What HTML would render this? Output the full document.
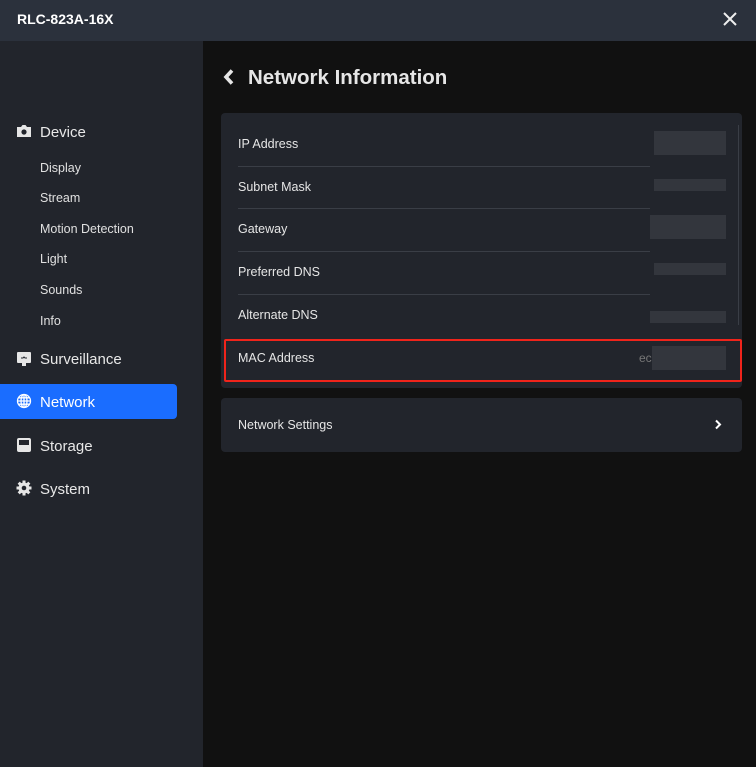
<!DOCTYPE html>
<html><head><meta charset="utf-8"><style>
*{margin:0;padding:0;box-sizing:border-box}
body{width:756px;height:767px;background:#111;font-family:"Liberation Sans",Arial,sans-serif;position:relative;overflow:hidden;color:#e6e6e6}
.hdr{position:absolute;left:0;top:0;width:756px;height:41px;background:#2b313c}
.hdr .t{position:absolute;left:17px;top:11px;font-size:14px;font-weight:bold;color:#fff}
.side{position:absolute;left:0;top:41px;width:203px;height:726px;background:#22252c}
.m{position:absolute;left:40px;font-size:15px;color:#e8e8e8}
.s{position:absolute;left:40px;font-size:12.5px;color:#e0e0e0}
.ic{position:absolute;left:16px}
.act{position:absolute;left:0;top:384px;width:177px;height:35px;background:#1a6dff;border-radius:0 4px 4px 0}
.card{position:absolute;left:221px;width:521px;background:#22252c;border-radius:4px}
.row{position:absolute;left:238px;font-size:12.5px;color:#e6e6e6}
.div{position:absolute;left:238px;width:412px;height:1px;background:#3a3e46}
.blur{position:absolute;background:#33363d}
</style></head><body>
<div class="hdr"><div class="t">RLC-823A-16X</div>
<svg style="position:absolute;left:723px;top:12px" width="14" height="14" viewBox="0 0 14 14"><path d="M1 1L13 13M13 1L1 13" stroke="#eee" stroke-width="2"/></svg></div>
<div class="side"></div>
<div class="act"></div>
<svg class="ic" style="top:124px" width="16" height="14" viewBox="0 0 16 14"><path d="M1 3h4l1.5-2h3L11 3h4v10H1z" fill="#e6e6e6"/><circle cx="8" cy="8" r="2.6" fill="#22252c"/></svg>
<div class="m" style="top:124px">Device</div>
<div class="s" style="top:161px">Display</div>
<div class="s" style="top:191px">Stream</div>
<div class="s" style="top:222px">Motion Detection</div>
<div class="s" style="top:252px">Light</div>
<div class="s" style="top:283px">Sounds</div>
<div class="s" style="top:314px">Info</div>
<svg class="ic" style="top:351px" width="16" height="16" viewBox="0 0 16 16"><rect x="1" y="1" width="14" height="11" rx="1" fill="#e6e6e6"/><rect x="6" y="12" width="4" height="3" fill="#e6e6e6"/><path d="M5 7h2l1-1 1 1h2" stroke="#22252c" fill="none"/></svg>
<div class="m" style="top:351px">Surveillance</div>
<svg class="ic" style="top:393px" width="16" height="16" viewBox="0 0 16 16" fill="none" stroke="#fff" stroke-width="1.3"><circle cx="8" cy="8" r="6.5"/><ellipse cx="8" cy="8" rx="3" ry="6.5"/><path d="M1.5 8h13M2.5 4.8h11M2.5 11.2h11M8 1.5v13"/></svg>
<div class="m" style="top:394px;color:#fff">Network</div>
<svg class="ic" style="top:437px" width="16" height="16" viewBox="0 0 16 16"><rect x="1" y="1" width="14" height="14" rx="2" fill="#e6e6e6"/><rect x="3" y="3" width="10" height="5" fill="#22252c"/></svg>
<div class="m" style="top:438px">Storage</div>
<svg class="ic" style="top:480px" width="16" height="16" viewBox="0 0 16 16"><g fill="#e6e6e6"><circle cx="8" cy="8" r="5.5"/><rect x="6.5" y="0.5" width="3" height="15"/><rect x="0.5" y="6.5" width="15" height="3"/><rect x="6.5" y="0.5" width="3" height="15" transform="rotate(45 8 8)"/><rect x="6.5" y="0.5" width="3" height="15" transform="rotate(-45 8 8)"/></g><circle cx="8" cy="8" r="2.3" fill="#22252c"/></svg>
<div class="m" style="top:481px">System</div>

<svg style="position:absolute;left:222px;top:68px" width="14" height="18" viewBox="0 0 14 18"><path d="M10 2.5L4 9l6 6.5" stroke="#e6e6e6" stroke-width="3.6" fill="none"/></svg>
<div style="position:absolute;left:248px;top:66px;font-size:20.5px;font-weight:bold;color:#e6e6e6">Network Information</div>

<div class="card" style="top:113px;height:275px"></div>
<div class="row" style="top:137px">IP Address</div>
<div class="div" style="top:166px"></div>
<div class="row" style="top:180px">Subnet Mask</div>
<div class="div" style="top:208px"></div>
<div class="row" style="top:222px">Gateway</div>
<div class="div" style="top:251px"></div>
<div class="row" style="top:265px">Preferred DNS</div>
<div class="div" style="top:294px"></div>
<div class="row" style="top:308px">Alternate DNS</div>
<div style="position:absolute;left:738px;top:125px;width:1px;height:200px;background:#3a3e46"></div>
<div class="blur" style="left:654px;top:131px;width:72px;height:24px"></div>
<div class="blur" style="left:654px;top:179px;width:72px;height:12px"></div>
<div class="blur" style="left:650px;top:215px;width:76px;height:24px"></div>
<div class="blur" style="left:654px;top:263px;width:72px;height:12px"></div>
<div class="blur" style="left:650px;top:311px;width:76px;height:12px"></div>
<div style="position:absolute;left:224px;top:339px;width:518px;height:43px;border:2px solid #f0241b;border-radius:2px"></div>
<div class="row" style="top:351px">MAC Address</div>
<div style="position:absolute;left:639px;top:351px;font-size:12px;color:#777">ec</div>
<div class="blur" style="left:652px;top:346px;width:74px;height:24px"></div>

<div class="card" style="top:398px;height:54px"></div>
<div class="row" style="top:418px">Network Settings</div>
<svg style="position:absolute;left:714px;top:419px" width="8" height="11" viewBox="0 0 8 11"><path d="M2 1.5l4 4-4 4" stroke="#fff" stroke-width="2" fill="none"/></svg>
</body></html>
